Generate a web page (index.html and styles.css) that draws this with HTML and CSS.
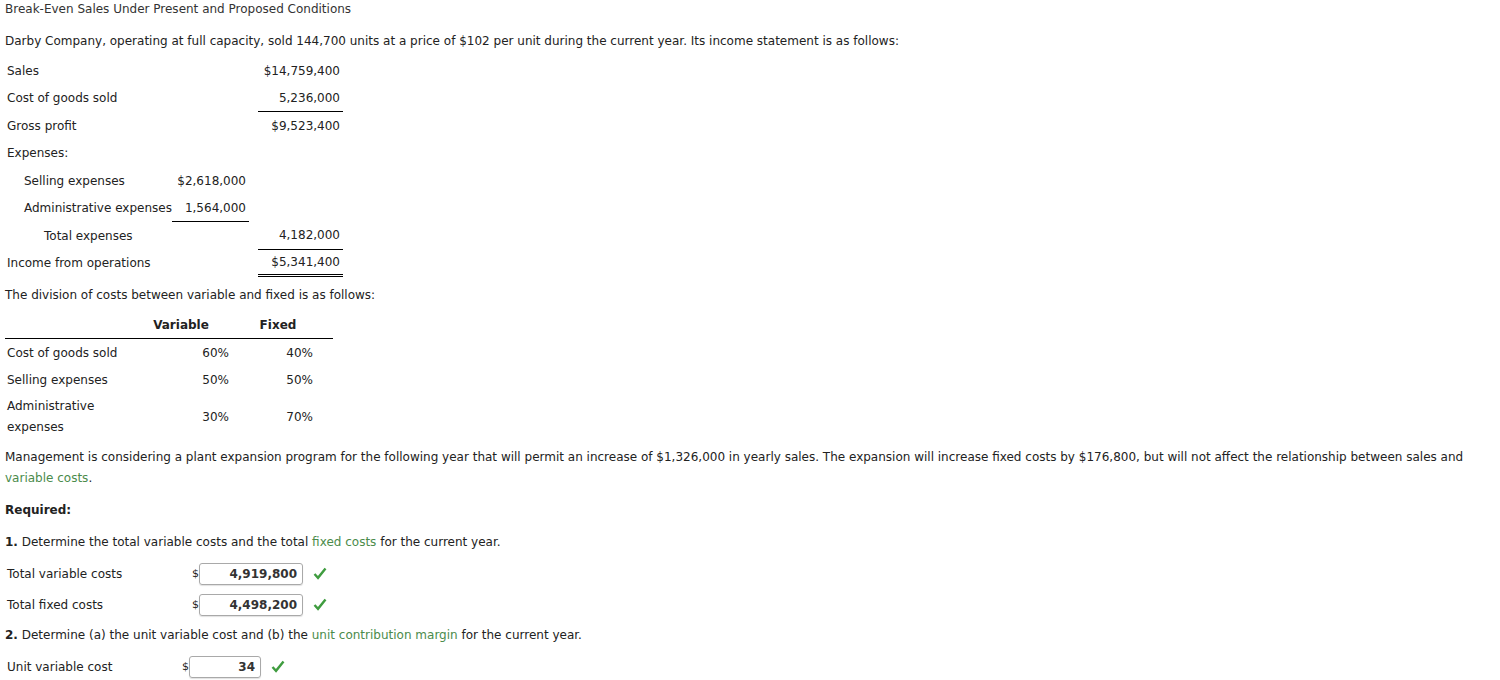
FILE: index.html
```html
<!DOCTYPE html>
<html>
<head>
<meta charset="utf-8">
<link rel="stylesheet" href="styles.css">
</head>
<body>
<div class="title">Break-Even Sales Under Present and Proposed Conditions</div>
<p class="intro">Darby Company, operating at full capacity, sold 144,700 units at a price of $102 per unit during the current year. Its income statement is as follows:</p>

<div class="income">
  <div class="c lbl">Sales</div><div class="c"></div><div class="c amt">$14,759,400</div>
  <div class="c lbl">Cost of goods sold</div><div class="c"></div><div class="c amt ul">5,236,000</div>
  <div class="c lbl">Gross profit</div><div class="c"></div><div class="c amt">$9,523,400</div>
  <div class="c lbl">Expenses:</div><div class="c"></div><div class="c"></div>
  <div class="c lbl ind1">Selling expenses</div><div class="c amt">$2,618,000</div><div class="c"></div>
  <div class="c lbl ind1">Administrative expenses</div><div class="c amt ul">1,564,000</div><div class="c"></div>
  <div class="c lbl ind2">Total expenses</div><div class="c"></div><div class="c amt ul">4,182,000</div>
  <div class="c lbl">Income from operations</div><div class="c"></div><div class="c amt dbl">$5,341,400</div>
</div>

<p class="division">The division of costs between variable and fixed is as follows:</p>

<div class="split">
  <div class="h"></div><div class="h hv">Variable</div><div class="h hf">Fixed</div>
  <div class="r lbl">Cost of goods sold</div><div class="r v">60%</div><div class="r f">40%</div>
  <div class="r lbl">Selling expenses</div><div class="r v">50%</div><div class="r f">50%</div>
  <div class="r lbl tall">Administrative<br>expenses</div><div class="r v">30%</div><div class="r f">70%</div>
</div>

<p class="mgmt">Management is considering a plant expansion program for the following year that will permit an increase of $1,326,000 in yearly sales. The expansion will increase fixed costs by $176,800, but will not affect the relationship between sales and <span class="term">variable costs</span>.</p>

<p class="req">Required:</p>

<p class="q"><b>1.</b> Determine the total variable costs and the total <span class="term">fixed costs</span> for the current year.</p>

<div class="answers a1">
  <div class="albl">Total variable costs</div>
  <div class="dollar">$</div>
  <div class="box w1">4,919,800</div>
  <svg class="chk" width="14" height="13" viewBox="0 0 14 13"><path d="M1.5 7 L5 10.8 L12.5 1.5" fill="none" stroke="#3f9c3f" stroke-width="2.4"/></svg>
  <div class="albl">Total fixed costs</div>
  <div class="dollar">$</div>
  <div class="box w1">4,498,200</div>
  <svg class="chk" width="14" height="13" viewBox="0 0 14 13"><path d="M1.5 7 L5 10.8 L12.5 1.5" fill="none" stroke="#3f9c3f" stroke-width="2.4"/></svg>
</div>

<p class="q q2"><b>2.</b> Determine (a) the unit variable cost and (b) the <span class="term">unit contribution margin</span> for the current year.</p>

<div class="answers a2">
  <div class="albl">Unit variable cost</div>
  <div class="dollar">$</div>
  <div class="box w2">34</div>
  <svg class="chk" width="14" height="13" viewBox="0 0 14 13"><path d="M1.5 7 L5 10.8 L12.5 1.5" fill="none" stroke="#3f9c3f" stroke-width="2.4"/></svg>
</div>
</body>
</html>
```
FILE: styles.css
```css
html, body {
  margin: 0;
  padding: 0;
  background: #fff;
}
body {
  padding: 1px 5px 0;
  font-family: "DejaVu Sans", Verdana, sans-serif;
  font-size: 12px;
  color: #222;
}
p { margin: 0; }
.title {
  color: #333;
  line-height: 17px;
}
.intro {
  margin-top: 15px;
  line-height: 17px;
}
.income {
  margin-top: 7px;
  display: grid;
  grid-template-columns: 167px 77px 94px;
  grid-auto-rows: 27.5px;
  width: 340px;
}
.income .c {
  display: flex;
  align-items: center;
  box-sizing: border-box;
}
.income .c:nth-child(3n) { margin-left: 9px; }
.income .lbl { padding-left: 2px; }
.income .ind1 { padding-left: 19px; }
.income .ind2 { padding-left: 39px; }
.income .amt {
  justify-content: flex-end;
  padding-right: 3px;
}
.income .ul { border-bottom: 1px solid #000; }
.income .dbl { border-bottom: 3px double #000; }

.division {
  line-height: 17px;
  margin-top: 10px;
}
.split {
  display: grid;
  grid-template-columns: 125px 102px 101px;
  margin-top: 7px;
}
.split .h {
  height: 28px;
  border-bottom: 1px solid #000;
  display: flex;
  align-items: center;
  justify-content: center;
  font-weight: bold;
  box-sizing: border-box;
}
.split .hf { padding-right: 9px; }
.split .r {
  min-height: 27px;
  display: flex;
  align-items: center;
  justify-content: flex-end;
}
.split .lbl {
  justify-content: flex-start;
  padding-left: 2px;
}
.split .tall {
  line-height: 21px;
  padding: 3px 0 3px 2px;
}
.split .v { padding-right: 3px; }
.split .f { padding-right: 20px; }

.mgmt {
  line-height: 21px;
  margin-top: 6px;
}
.term { color: #4b8b4b; }
.req {
  font-weight: bold;
  margin-top: 11px;
  line-height: 21px;
}
.q {
  margin-top: 11px;
  line-height: 21px;
}
.answers {
  display: grid;
  align-items: center;
  grid-auto-rows: 31px;
}
.a1 {
  grid-template-columns: 186px 8px 104px 24px;
  margin-top: 5px;
}
.a2 {
  grid-template-columns: 176px 8px 72px 24px;
  margin-top: 5px;
}
.albl { padding-left: 2px; }
.dollar { text-align: right; font-size: 11px; }
.box {
  height: 22px;
  box-sizing: border-box;
  border: 1px solid #a9a9a9;
  border-radius: 3px;
  box-shadow: 0 1px 1px rgba(0,0,0,0.12);
  font-weight: bold;
  color: #333;
  text-align: right;
  padding-right: 5px;
  line-height: 20px;
}
.chk { margin-left: 10px; }
.q2 { margin-top: 5px; }
```
